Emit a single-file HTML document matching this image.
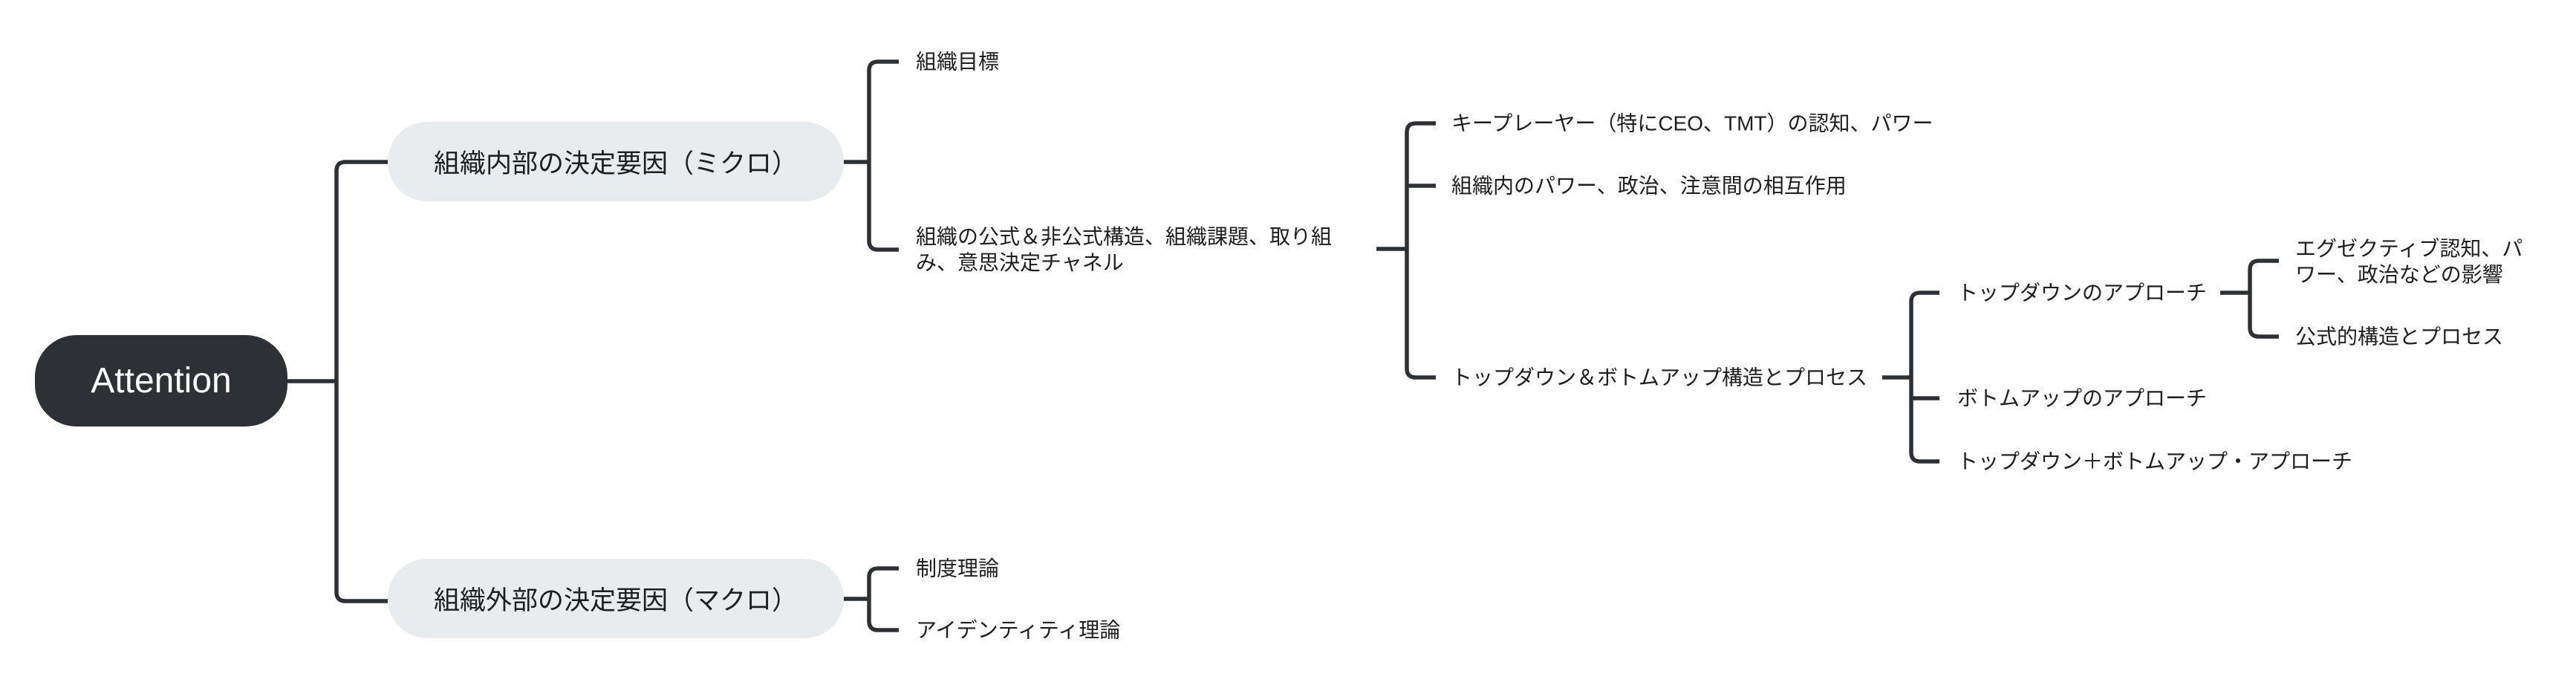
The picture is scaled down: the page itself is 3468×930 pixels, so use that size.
<!DOCTYPE html>
<html><head><meta charset="utf-8"><style>
html,body{margin:0;padding:0;background:#fff;}
body{width:3468px;height:930px;position:relative;overflow:hidden;font-family:"Liberation Sans","Noto Sans CJK JP",sans-serif;color:#1e1e1e;}
.t{position:absolute;font-size:28px;line-height:35px;white-space:nowrap;transform:translateY(-50%);}
.root{position:absolute;left:47px;top:451px;width:340px;height:123px;border-radius:56px;background:#2d3136;color:#fff;font-size:48px;display:flex;align-items:center;justify-content:center;}
.main{position:absolute;left:522px;width:614px;height:107px;border-radius:53px;background:#e9ecef;font-size:35px;display:flex;align-items:center;justify-content:center;}
svg{position:absolute;left:0;top:0;}
</style></head><body>
<svg width="3468" height="930" fill="none" stroke="#2d3136" stroke-width="5.5">
<path d="M386,513 H453"/>
<path d="M522,218 H465 Q453,218 453,230 V797 Q453,809 465,809 H522"/>
<path d="M1136,218 H1170"/>
<path d="M1210,83 H1182 Q1170,83 1170,95 V324 Q1170,336 1182,336 H1210"/>
<path d="M1136,806 H1170"/>
<path d="M1210,765 H1182 Q1170,765 1170,777 V836 Q1170,848 1182,848 H1210"/>
<path d="M1853,335 H1894"/>
<path d="M1933,166 H1906 Q1894,166 1894,178 V496 Q1894,508 1906,508 H1933"/>
<path d="M1894,250 H1933"/>
<path d="M2534,508 H2573"/>
<path d="M2611,394 H2585 Q2573,394 2573,406 V609 Q2573,621 2585,621 H2611"/>
<path d="M2573,536 H2611"/>
<path d="M2989,394 H3029"/>
<path d="M3068,351 H3041 Q3029,351 3029,363 V441 Q3029,453 3041,453 H3068"/>
</svg>
<div class="root">Attention</div>
<div class="main" style="top:164px;">組織内部の決定要因（ミクロ）</div>
<div class="main" style="top:752px;">組織外部の決定要因（マクロ）</div>
<div class="t" style="left:1233px;top:83px;">組織目標</div>
<div class="t" style="left:1233px;top:336px;">組織の公式＆非公式構造、組織課題、取り組<br>み、意思決定チャネル</div>
<div class="t" style="left:1233px;top:765px;">制度理論</div>
<div class="t" style="left:1233px;top:848px;">アイデンティティ理論</div>
<div class="t" style="left:1954px;top:166px;">キープレーヤー（特にCEO、TMT）の認知、パワー</div>
<div class="t" style="left:1954px;top:250px;">組織内のパワー、政治、注意間の相互作用</div>
<div class="t" style="left:1954px;top:508px;">トップダウン＆ボトムアップ構造とプロセス</div>
<div class="t" style="left:2635px;top:394px;">トップダウンのアプローチ</div>
<div class="t" style="left:2635px;top:536px;">ボトムアップのアプローチ</div>
<div class="t" style="left:2635px;top:621px;">トップダウン＋ボトムアップ・アプローチ</div>
<div class="t" style="left:3090px;top:352px;">エグゼクティブ認知、パ<br>ワー、政治などの影響</div>
<div class="t" style="left:3090px;top:453px;">公式的構造とプロセス</div>
</body></html>
